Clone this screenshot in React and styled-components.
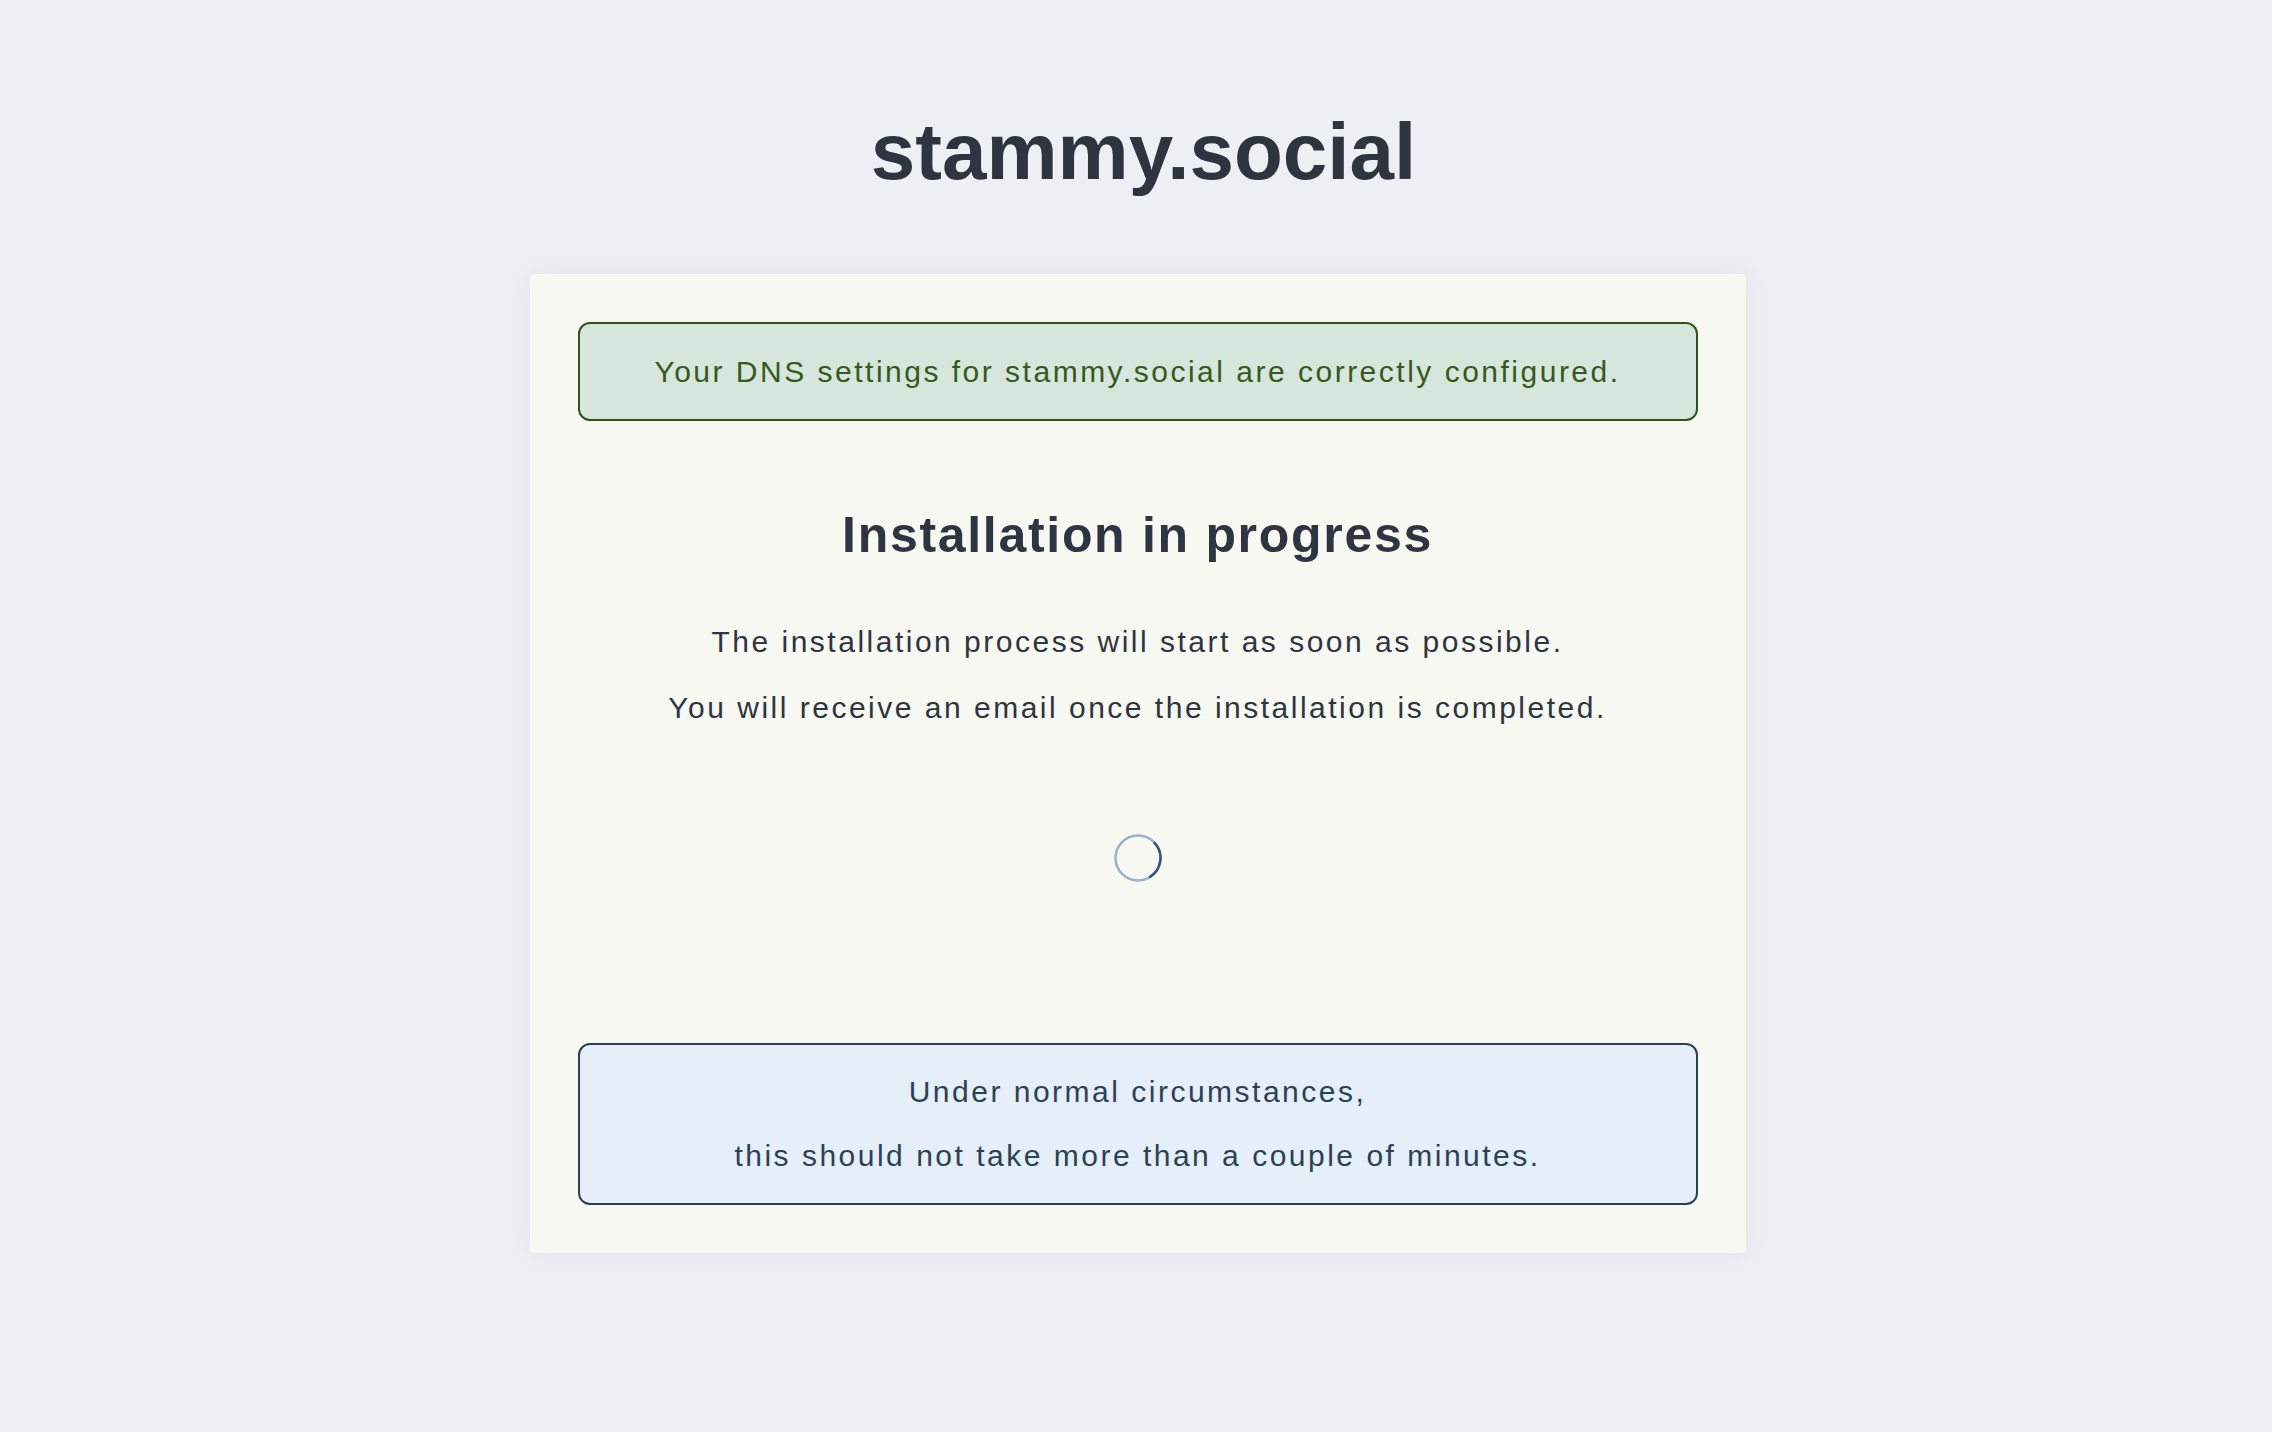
import React from "react";
import styled, { createGlobalStyle } from "styled-components";

const GlobalStyle = createGlobalStyle`
  body {
    margin: 0;
    background-color: #eceff4;
    font-family: "Liberation Sans", Arial, sans-serif;
    color: #2e3440;
  }
`;

const Page = styled.div`
  min-height: 1432px;
  padding-left: 3px;
  display: flex;
  flex-direction: column;
  align-items: center;
`;

const SiteTitle = styled.h1`
  margin: 104px 0 74px 12px;
  font-size: 80px;
  line-height: 96px;
  font-weight: 700;
  letter-spacing: 0;
  color: #2e3440;
`;

const Card = styled.div`
  box-sizing: border-box;
  width: 1216px;
  padding: 48px;
  background-color: #f8f8f3;
  border-radius: 4px;
  box-shadow: 0 0 24px rgba(46, 52, 64, 0.06);
  display: flex;
  flex-direction: column;
  align-items: stretch;
`;

const Notice = styled.div`
  border: 2px solid ${(props) => props.border};
  background-color: ${(props) => props.bg};
  color: ${(props) => props.color};
  border-radius: 12px;
  padding: ${(props) => props.padding};
  text-align: center;
  font-size: 30px;
  line-height: ${(props) => props.lineHeight};
  letter-spacing: 2.5px;
`;

const Heading = styled.h2`
  margin: 84px 0 44px 0;
  text-align: center;
  font-size: 50px;
  line-height: 60px;
  font-weight: 700;
  letter-spacing: 1.7px;
  color: #2e3440;
`;

const Text = styled.p`
  margin: 0;
  text-align: center;
  font-size: 30px;
  line-height: 66px;
  letter-spacing: 2.5px;
  color: #2e3440;
`;

const SpinnerRow = styled.div`
  display: flex;
  justify-content: center;
  padding: 92px 0 160px 0;
`;

const Spinner = () => (
  <svg width="50" height="50" viewBox="0 0 50 50">
    <circle cx="25" cy="25" r="22.5" fill="none" stroke="#9db0c9" strokeWidth="2.5" />
    <path
      d="M 40.9 9.1 A 22.5 22.5 0 0 1 36.2 44.5"
      fill="none"
      stroke="#34527c"
      strokeWidth="2.5"
    />
  </svg>
);

const App = () => {
  return (
    <Page>
      <GlobalStyle />
      <SiteTitle>stammy.social</SiteTitle>
      <Card>
        <Notice
          border="#2f5318"
          bg="#d6e6dc"
          color="#355a1d"
          padding="25px 20px"
          lineHeight="45px"
        >
          Your DNS settings for stammy.social are correctly configured.
        </Notice>
        <Heading>Installation in progress</Heading>
        <Text>The installation process will start as soon as possible.</Text>
        <Text>You will receive an email once the installation is completed.</Text>
        <SpinnerRow>
          <Spinner />
        </SpinnerRow>
        <Notice
          border="#2b4256"
          bg="#e6eef9"
          color="#2b4256"
          padding="15px 20px"
          lineHeight="64px"
        >
          Under normal circumstances,
          <br />
          this should not take more than a couple of minutes.
        </Notice>
      </Card>
    </Page>
  );
};

export default App;
